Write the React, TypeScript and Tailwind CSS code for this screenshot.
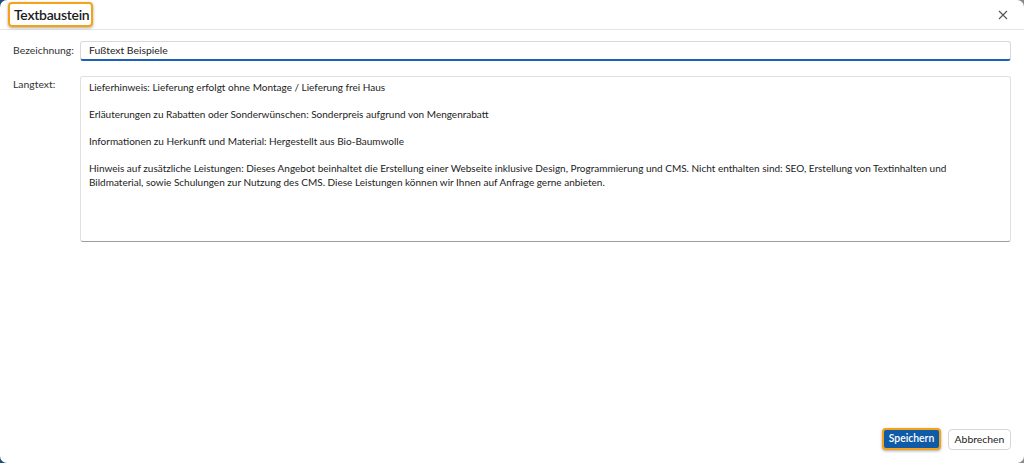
import React from "react";

export default function App() {
  const font = { fontFamily: 'Lato, "Noto Sans", "Liberation Sans", sans-serif' };
  return (
    <div className="w-[1024px] h-[463px] bg-[linear-gradient(to_right,#1d4f7c,#1d4f7c_50%,#8a8a8a_50%)]" style={font}>
      <div className="w-full h-full bg-white rounded-[7px] flex flex-col overflow-hidden">
        <div className="h-[30px] flex items-center justify-between border-b border-[#e6e6e6] pl-[8px] pr-[16px] shrink-0">
          <div className="h-[25px] w-[85px] pl-[4px] flex items-center border-2 border-[#f5a316] rounded-[4px] shadow-[0_1px_3px_rgba(0,0,0,0.35)]">
            <span className="text-[14px] tracking-[-0.3px] font-semibold text-[#1b1b1b] leading-none">Textbaustein</span>
          </div>
          <svg width="10" height="10" viewBox="0 0 10 10" className="mt-[1px]">
            <path d="M1 1 L9 9 M9 1 L1 9" stroke="#555" strokeWidth="1.1" />
          </svg>
        </div>
        <div className="flex-1 flex flex-col px-[13px] pt-[10px]">
          <div className="flex items-center">
            <div className="w-[67px] text-[10.4px] text-[#333]">Bezeichnung:</div>
            <div className="flex-1 h-[20px] border border-[#d9d9d9] border-b-[#1e62b5] border-b-2 rounded-[3px] flex items-center px-[8px] text-[10.4px] text-[#222] mt-[1px]">
              Fußtext Beispiele
            </div>
          </div>
          <div className="flex mt-[15px]">
            <div className="w-[67px] text-[10.4px] text-[#333] pt-[1px]">Langtext:</div>
            <div className="flex-1 h-[166px] border border-[#e0e0e0] border-b-[#9e9e9e] rounded-[3px] px-[8px] pt-[4px] text-[10px] leading-[13.5px] text-[#222]">
              <p>Lieferhinweis: Lieferung erfolgt ohne Montage / Lieferung frei Haus</p>
              <p className="mt-[13.5px]">Erläuterungen zu Rabatten oder Sonderwünschen: Sonderpreis aufgrund von Mengenrabatt</p>
              <p className="mt-[13.5px]">Informationen zu Herkunft und Material: Hergestellt aus Bio-Baumwolle</p>
              <p className="mt-[13.5px]">
                Hinweis auf zusätzliche Leistungen: Dieses Angebot beinhaltet die Erstellung einer Webseite inklusive Design, Programmierung und CMS. Nicht enthalten sind: SEO, Erstellung von Textinhalten und
                <br />
                Bildmaterial, sowie Schulungen zur Nutzung des CMS. Diese Leistungen können wir Ihnen auf Anfrage gerne anbieten.
              </p>
            </div>
          </div>
        </div>
        <div className="flex justify-end gap-[7px] px-[13px] pb-[13px]">
          <button className="h-[22px] w-[59px] bg-[#0f5ba8] text-white text-[10.4px] font-semibold rounded-[4px] border-2 border-[#f5a316] shadow-[0_1px_3px_rgba(0,0,0,0.35)]">
            Speichern
          </button>
          <button className="h-[21px] w-[63px] bg-white text-[#222] text-[10.4px] rounded-[4px] border border-[#d6d6d6] mt-[1px]">
            Abbrechen
          </button>
        </div>
      </div>
    </div>
  );
}
